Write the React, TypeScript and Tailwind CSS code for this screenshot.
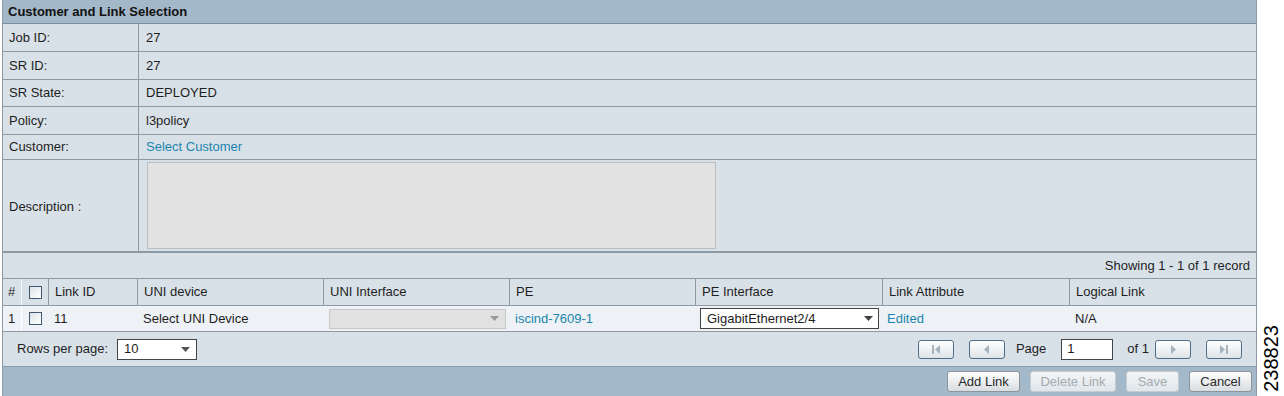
import React from "react"

const font = { fontFamily: '"Liberation Sans", Arial, sans-serif' }

function Checkbox() {
  return (
    <span className="inline-block h-[13px] w-[13px] border border-[#3d5870] bg-gradient-to-br from-[#dfe3e7] to-white" />
  )
}

function Caret({ color = "#6b6b6b" }: { color?: string }) {
  return (
    <svg width="9" height="5" viewBox="0 0 9 5">
      <path d="M0 0h9L4.5 5z" fill={color} />
    </svg>
  )
}

function PagerButton({ kind }: { kind: "first" | "prev" | "next" | "last" }) {
  return (
    <span className="flex h-[19px] w-[36px] items-center justify-center rounded-[3px] border border-[#4f6d86] bg-gradient-to-b from-white to-[#dfe4e8]">
      <svg width="12" height="9" viewBox="0 0 12 9">
        {kind === "first" && (
          <>
            <rect x="2" y="0" width="2" height="9" fill="#a8b2ba" />
            <path d="M10 0v9L5 4.5z" fill="#a8b2ba" />
          </>
        )}
        {kind === "prev" && <path d="M8 0v9L3 4.5z" fill="#a8b2ba" />}
        {kind === "next" && <path d="M4 0v9l5-4.5z" fill="#a8b2ba" />}
        {kind === "last" && (
          <>
            <path d="M2 0v9l5-4.5z" fill="#a8b2ba" />
            <rect x="8" y="0" width="2" height="9" fill="#a8b2ba" />
          </>
        )}
      </svg>
    </span>
  )
}

function ActionButton({
  label,
  width,
  disabled,
}: {
  label: string
  width: string
  disabled?: boolean
}) {
  return (
    <span
      className={
        disabled
          ? `flex h-[21px] ${width} items-center justify-center rounded-[3px] border border-[#c4ccd2] bg-gradient-to-b from-[#f3f5f6] to-[#e1e6ea] text-[#a4abb1]`
          : `flex h-[21px] ${width} items-center justify-center rounded-[3px] border border-[#8c959c] bg-gradient-to-b from-white to-[#d9dde0] text-[#2a2a2a]`
      }
    >
      {label}
    </span>
  )
}

const infoRows = [
  { label: "Job ID:", value: "27", h: "h-[28px]" },
  { label: "SR ID:", value: "27", h: "h-[28px]" },
  { label: "SR State:", value: "DEPLOYED", h: "h-[27px]" },
  { label: "Policy:", value: "l3policy", h: "h-[28px]" },
]

const columns = [
  { label: "Link ID", w: "w-[89px]" },
  { label: "UNI device", w: "w-[186px]" },
  { label: "UNI Interface", w: "w-[186px]" },
  { label: "PE", w: "w-[186px]" },
  { label: "PE Interface", w: "w-[187px]" },
  { label: "Link Attribute", w: "w-[187px]" },
  { label: "Logical Link", w: "flex-1" },
]

export default function App() {
  return (
    <div
      className="flex h-[396px] w-[1284px] bg-white pl-[2px] text-[13px] text-[#1e1e1e]"
      style={font}
    >
      <div className="flex w-[1255px] flex-col border-x border-[#8d99a3] bg-[#d9e1e8]">
        <div className="flex h-[24px] items-center border-b border-[#7f8d98] bg-[#a3b8c8] pl-[5px] pt-[1px] text-[13px] font-bold text-[#111]">
          Customer and Link Selection
        </div>

        {infoRows.map((r) => (
          <div key={r.label} className={`flex ${r.h} border-b border-[#8d99a3]`}>
            <div className="flex w-[136px] items-center border-r border-[#8d99a3] pl-[6px]">
              {r.label}
            </div>
            <div className="flex items-center pl-[7px]">{r.value}</div>
          </div>
        ))}

        <div className="flex h-[25px] border-b border-[#8d99a3]">
          <div className="flex w-[136px] items-center border-r border-[#8d99a3] pl-[6px]">
            Customer:
          </div>
          <div className="flex items-center pl-[7px] text-[#1a86ad]">Select Customer</div>
        </div>

        <div className="flex h-[93px] border-b-2 border-[#8d99a3]">
          <div className="flex w-[136px] items-center border-r border-[#8d99a3] pl-[6px] pt-[2px]">
            Description :
          </div>
          <div className="pl-[8px] pt-[2px]">
            <div className="h-[87px] w-[569px] border border-[#bdbdbd] bg-[#e2e2e2]" />
          </div>
        </div>

        <div className="flex h-[26px] items-center justify-end border-b border-[#8d99a3] pr-[6px]">
          Showing 1 - 1 of 1 record
        </div>

        <div className="flex h-[27px] border-b border-[#8d99a3]">
          <div className="flex w-[19px] items-center border-r border-[#f4f6f8] pl-[5px]">#</div>
          <div className="flex w-[27px] items-center justify-center border-r border-[#8d99a3]">
            <Checkbox />
          </div>
          {columns.map((c, i) => (
            <div
              key={c.label}
              className={
                i === columns.length - 1
                  ? `flex ${c.w} items-center pl-[6px]`
                  : `flex ${c.w} items-center border-r border-[#8d99a3] pl-[6px]`
              }
            >
              {c.label}
            </div>
          ))}
        </div>

        <div className="flex h-[26px] border-b border-[#8d99a3] bg-[#eef2f6]">
          <div className="flex w-[19px] items-center border-r border-white pl-[5px]">1</div>
          <div className="flex w-[27px] items-center justify-center">
            <Checkbox />
          </div>
          <div className="flex w-[89px] items-center pl-[5px]">11</div>
          <div className="flex w-[186px] items-center pl-[5px]">Select UNI Device</div>
          <div className="flex w-[186px] items-center pl-[5px]">
            <div className="flex h-[20px] w-[177px] items-center justify-end border border-[#c7c7c7] bg-[#e1e1e1] pr-[6px]">
              <Caret color="#9a9a9a" />
            </div>
          </div>
          <div className="flex w-[186px] items-center pl-[5px] text-[#1a86ad]">iscind-7609-1</div>
          <div className="flex w-[187px] items-center pl-[4px]">
            <div className="flex h-[21px] w-[179px] items-center justify-between border border-[#444] bg-white pl-[6px] pr-[5px]">
              <span>GigabitEthernet2/4</span>
              <Caret color="#444" />
            </div>
          </div>
          <div className="flex w-[187px] items-center pl-[4px] text-[#1a86ad]">Edited</div>
          <div className="flex flex-1 items-center pl-[5px]">N/A</div>
        </div>

        <div className="flex h-[35px] items-center justify-between border-b border-[#8d99a3] pl-[14px] pr-[14px]">
          <div className="flex items-center">
            <span>Rows per page:</span>
            <div className="ml-[9px] flex h-[21px] w-[80px] items-center justify-between border border-[#444] bg-white pl-[6px] pr-[6px]">
              <span>10</span>
              <Caret color="#555" />
            </div>
          </div>
          <div className="flex items-center">
            <PagerButton kind="first" />
            <span className="ml-[15px]">
              <PagerButton kind="prev" />
            </span>
            <span className="ml-[11px]">Page</span>
            <div className="ml-[15px] flex h-[21px] w-[52px] items-center border border-[#444] bg-white pl-[5px]">
              1
            </div>
            <span className="ml-[14px] mr-[6px]">of 1</span>
            <PagerButton kind="next" />
            <span className="ml-[15px]">
              <PagerButton kind="last" />
            </span>
          </div>
        </div>

        <div className="flex flex-1 items-center justify-end gap-[10px] bg-[#a3b8c8] pr-[4px]">
          <ActionButton label="Add Link" width="w-[73px]" />
          <ActionButton label="Delete Link" width="w-[86px]" disabled />
          <ActionButton label="Save" width="w-[53px]" disabled />
          <ActionButton label="Cancel" width="w-[63px]" />
        </div>
      </div>

      <div className="flex flex-1 items-end justify-center pb-[4px]">
        <span className="rotate-180 text-[20px] leading-none text-black [writing-mode:vertical-rl]">
          238823
        </span>
      </div>
    </div>
  )
}
